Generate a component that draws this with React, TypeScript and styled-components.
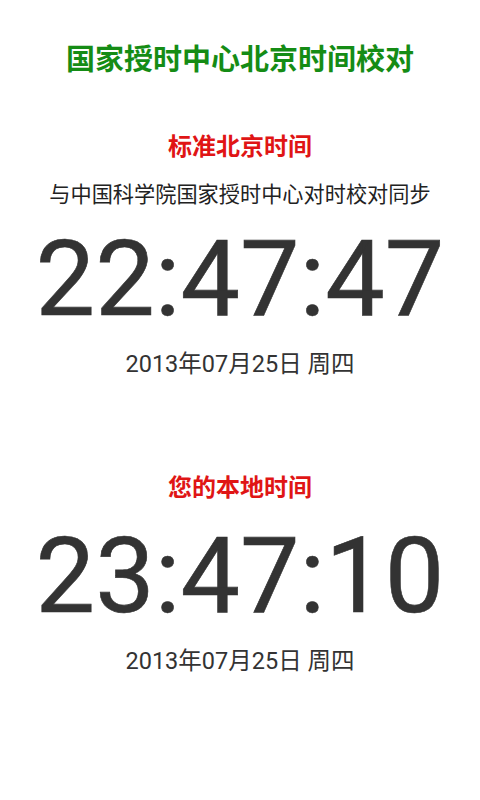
import styled, { createGlobalStyle } from 'styled-components';

const GlobalStyle = createGlobalStyle`
  html, body {
    margin: 0;
    padding: 0;
    background: #ffffff;
  }
  body {
    font-family: Roboto, "Noto Sans CJK SC", sans-serif;
  }
`;

const sections = [
  { label: '标准北京时间', note: '与中国科学院国家授时中心对时校对同步', time: '22:47:47', date: '2013年07月25日 周四' },
  { label: '您的本地时间', note: '', time: '23:47:10', date: '2013年07月25日 周四' },
];

export default function App() {
  return (
    <Page>
      <GlobalStyle />
      <Title>国家授时中心北京时间校对</Title>
      {sections.map((s, i) => (
        <Section key={i} first={i === 0}>
          <Label>{s.label}</Label>
          {s.note && <Note>{s.note}</Note>}
          <Clock tight={!s.note}>{s.time}</Clock>
          <DateLine>{s.date}</DateLine>
        </Section>
      ))}
    </Page>
  );
}

const Page = styled.div`
  width: 480px;
  height: 800px;
  display: flex;
  flex-direction: column;
  align-items: center;
  padding-top: 40px;
  box-sizing: border-box;
  color: #333333;
`;

const Title = styled.h1`
  margin: 0;
  font-family: Roboto, "Noto Sans CJK SC", sans-serif;
  font-size: 29px;
  line-height: 40px;
  font-weight: 700;
  color: #158c15;
`;

const Section = styled.section<{ first: boolean }>`
  display: flex;
  flex-direction: column;
  align-items: center;
  margin-top: ${(p) => (p.first ? '51px' : '93px')};
`;

const Label = styled.h2`
  margin: 0;
  font-size: 24px;
  line-height: 32px;
  font-weight: 700;
  color: #e01515;
`;

const Note = styled.div`
  margin-top: 17px;
  font-size: 21.2px;
  line-height: 30px;
  color: #222222;
`;

const Clock = styled.div<{ tight: boolean }>`
  margin-top: ${(p) => (p.tight ? '20px' : '17px')};
  font-family: Roboto, sans-serif;
  font-size: 106px;
  line-height: 105px;
  color: #333333;
  -webkit-text-stroke: 0.6px #333333;
`;

const DateLine = styled.div`
  margin-top: 17px;
  font-size: 23.5px;
  line-height: 30px;
  color: #333333;
`;
